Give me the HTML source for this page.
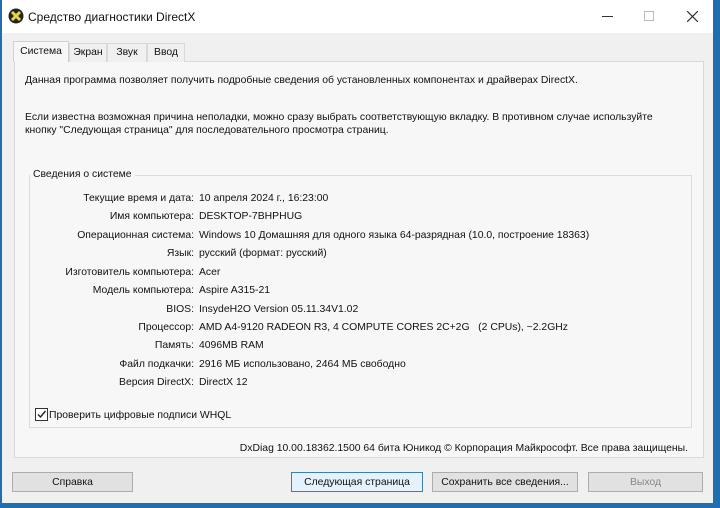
<!DOCTYPE html><html><head><meta charset="utf-8"><style>
*{margin:0;padding:0;box-sizing:border-box}
body{width:720px;height:508px;background:#1f6fb0;font-family:"Liberation Sans",sans-serif;font-size:10.4px;color:#111;position:relative;overflow:hidden}
.win{position:absolute;left:2px;top:0;width:711px;height:503px;background:#f0f0f0}
.title{position:absolute;left:0;top:0;width:711px;height:33px;background:#fff}
.abs{position:absolute;white-space:nowrap}
.panel{position:absolute;left:12px;top:61px;width:690px;height:397px;background:#f7f7f7;border:1px solid #d9d9d9}
.tab{position:absolute;top:43px;height:19px;border:1px solid #d9d9d9;border-bottom:none;background:#f0f0f0;padding:3px 0 0;text-align:center}
.grp{position:absolute;left:27px;top:175px;width:663px;height:253px;border:1px solid #dcdcdc}
.lbl{position:absolute;left:30px;width:162px;text-align:right}
.val{position:absolute;left:197px;white-space:nowrap}
.btn{position:absolute;top:472px;height:20px;background:#e1e1e1;border:1px solid #adadad;text-align:center;padding-top:4px}
</style></head><body>
<div class="win">
<div class="title">
<svg class="abs" style="left:6px;top:8px" width="16" height="16" viewBox="0 0 16 16"><circle cx="8" cy="8" r="7.5" fill="#222"/><path d="M4 4L12 12M12 4L4 12" stroke="#e8d640" stroke-width="3"/></svg>
<div class="abs" style="left:26px;top:10px;font-size:12px">Средство диагностики DirectX</div>
<div class="abs" style="left:600px;top:16px;width:11px;height:1px;background:#333"></div>
<div class="abs" style="left:642px;top:11px;width:10px;height:10px;border:1px solid #bbb"></div>
<svg class="abs" style="left:685px;top:11px" width="11" height="11"><path d="M0 0L11 11M11 0L0 11" stroke="#333" stroke-width="1.2"/></svg>
</div>
<div class="panel"></div>
<div class="tab" style="left:11px;top:41px;width:56px;height:21px;background:#f7f7f7;border-color:#d0d0d0;z-index:2;padding-top:4px">Система</div>
<div class="tab" style="left:67px;width:38px">Экран</div>
<div class="tab" style="left:105px;width:40px">Звук</div>
<div class="tab" style="left:145px;width:38px">Ввод</div>
<div class="abs" style="left:23px;top:75px">Данная программа позволяет получить подробные сведения об установленных компонентах и драйверах DirectX.</div>
<div class="abs" style="left:23px;top:111px;line-height:13px">Если известна возможная причина неполадки, можно сразу выбрать соответствующую вкладку. В противном случае используйте<br>кнопку "Следующая страница" для последовательного просмотра страниц.</div>
<div class="grp"></div>
<div class="abs" style="left:28px;top:169px;background:#f7f7f7;padding:0 3px">Сведения о системе</div>
<div class="lbl" style="top:193px">Текущие время и дата:</div><div class="val" style="top:193px">10 апреля 2024 г., 16:23:00</div>
<div class="lbl" style="top:211px">Имя компьютера:</div><div class="val" style="top:211px">DESKTOP-7BHPHUG</div>
<div class="lbl" style="top:230px">Операционная система:</div><div class="val" style="top:230px">Windows 10 Домашняя для одного языка 64-разрядная (10.0, построение 18363)</div>
<div class="lbl" style="top:248px">Язык:</div><div class="val" style="top:248px">русский (формат: русский)</div>
<div class="lbl" style="top:267px">Изготовитель компьютера:</div><div class="val" style="top:267px">Acer</div>
<div class="lbl" style="top:285px">Модель компьютера:</div><div class="val" style="top:285px">Aspire A315-21</div>
<div class="lbl" style="top:304px">BIOS:</div><div class="val" style="top:304px">InsydeH2O Version 05.11.34V1.02</div>
<div class="lbl" style="top:322px">Процессор:</div><div class="val" style="top:322px">AMD A4-9120 RADEON R3, 4 COMPUTE CORES 2C+2G &nbsp;&nbsp;(2 CPUs), ~2.2GHz</div>
<div class="lbl" style="top:340px">Память:</div><div class="val" style="top:340px">4096MB RAM</div>
<div class="lbl" style="top:359px">Файл подкачки:</div><div class="val" style="top:359px">2916 МБ использовано, 2464 МБ свободно</div>
<div class="lbl" style="top:377px">Версия DirectX:</div><div class="val" style="top:377px">DirectX 12</div>
<div class="abs" style="left:33px;top:408px;width:13px;height:13px;border:1px solid #333;background:#fff"><svg width="11" height="11" style="position:absolute;left:0;top:0"><path d="M2 5.5L4.5 8L9.5 2" stroke="#222" stroke-width="1.4" fill="none"/></svg></div>
<div class="abs" style="left:47px;top:410px">Проверить цифровые подписи WHQL</div>
<div class="abs" style="right:25px;top:443px">DxDiag 10.00.18362.1500 64 бита Юникод © Корпорация Майкрософт. Все права защищены.</div>
<div class="btn" style="left:10px;width:121px">Справка</div>
<div class="btn" style="left:289px;width:132px;border:1px solid #3c7fb1;background:#e5f1fb">Следующая страница</div>
<div class="btn" style="left:430px;width:146px">Сохранить все сведения...</div>
<div class="btn" style="left:586px;width:115px;color:#888">Выход</div>
</div>
</body></html>
